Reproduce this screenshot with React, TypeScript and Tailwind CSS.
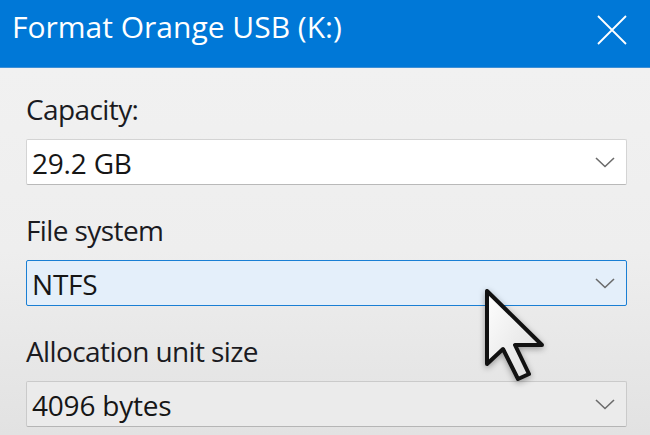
import React from "react";

const font = { fontFamily: '"Open Sans", "Noto Sans", sans-serif' };

interface ComboProps {
    value: string;
    variant?: "plain" | "focused" | "muted";
}

const Chevron = () => (
    <svg width="20" height="11" viewBox="0 0 20 11" className="shrink-0">
        <path d="M1 1 L10 9.5 L19 1" fill="none" stroke="#6b6b6b" strokeWidth="1.6" />
    </svg>
);

const Combo = ({ value, variant = "plain" }: ComboProps) => {
    const styles = {
        plain: "bg-white border-[#d4d4d4] border-b-[#b9b9b9]",
        focused: "bg-[#e4effa] border-[#1a7fd4] border-[1.5px]",
        muted: "bg-[#ebebeb] border-[#cacaca] border-b-[#b5b5b5]",
    };
    return (
        <div
            className={`flex items-center justify-between h-[46px] w-[601px] border rounded-[2px] pl-[5px] pr-[11px] ${styles[variant]}`}
        >
            <span className="text-[28px] leading-[44px] pt-[2px] tracking-[-0.2px] text-[#161616]">{value}</span>
            <Chevron />
        </div>
    );
};

const Field = ({ label, children }: { label: string; children: React.ReactNode }) => (
    <div className="flex flex-col">
        <div className="h-[34px] text-[28px] leading-[34px] tracking-[-0.6px] text-[#1b1b1f]">{label}</div>
        <div className="mt-[13px]">{children}</div>
    </div>
);

const Cursor = () => (
    <svg
        width="72"
        height="104"
        viewBox="0 0 72 104"
        className="absolute left-[481px] top-[285px] drop-shadow-[0_2px_3px_rgba(0,0,0,0.35)]"
    >
        <defs>
            <linearGradient id="cur" x1="0" y1="0" x2="1" y2="1">
                <stop offset="0" stopColor="#ffffff" />
                <stop offset="1" stopColor="#dcdcdc" />
            </linearGradient>
        </defs>
        <path
            d="M6 6 L6 79 L22 64 L37 94 L48 89 L34 60 L61 60 Z"
            fill="url(#cur)"
            stroke="#111"
            strokeWidth="4"
            strokeLinejoin="round"
        />
    </svg>
);

export default function App() {
    return (
        <div className="relative w-[650px] h-[435px] overflow-hidden" style={font}>
            <div className="flex items-start justify-between h-[68px] bg-[#0078d7] border-b border-[#3d8fd6] pl-[12px] pr-[23px]">
                <span className="text-[30px] leading-[34px] pt-[10px] text-white">Format Orange USB (K:)</span>
                <svg width="30" height="30" viewBox="0 0 30 30" className="mt-[15px]">
                    <path d="M1 1 L29 29 M29 1 L1 29" stroke="#ffffff" strokeWidth="1.8" fill="none" />
                </svg>
            </div>
            <div className="flex flex-col gap-[28px] h-[367px] pl-[26px] pt-[24px] bg-gradient-to-b from-[#f1f1f1] via-[#eeeeee] to-[#e2e2e2]">
                <Field label="Capacity:">
                    <Combo value="29.2 GB" />
                </Field>
                <Field label="File system">
                    <Combo value="NTFS" variant="focused" />
                </Field>
                <Field label="Allocation unit size">
                    <Combo value="4096 bytes" variant="muted" />
                </Field>
            </div>
            <Cursor />
        </div>
    );
}
